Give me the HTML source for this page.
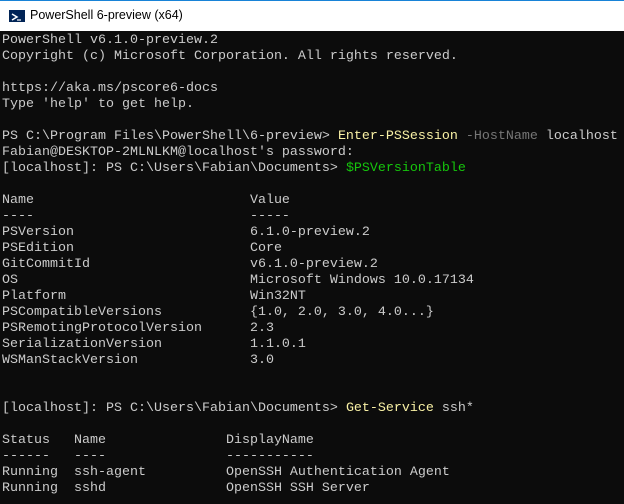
<!DOCTYPE html>
<html><head><style>
html,body{margin:0;padding:0;width:624px;height:504px;overflow:hidden;background:#0c0c0c}
.title{position:absolute;left:0;top:0;width:624px;height:31px;background:#fff;border-top:1px solid #1883d7;box-sizing:border-box}
.title span{position:absolute;left:30px;top:7px;font:12.5px "Liberation Sans",sans-serif;color:#000}
.icon{position:absolute;left:9px;top:9px;width:16px;height:12px;background:#012456;}
pre{position:absolute;left:2px;top:33px;margin:0;font-family:"Liberation Mono",monospace;font-size:13.33px;line-height:16px;color:#cccccc;white-space:pre}
.y{color:#f9f1a5}.g{color:#16c60c}.d{color:#767676}
</style></head><body>
<div class="title"><div class="icon"><svg width="16" height="12"><path d="M3 3 L8 6 L3 9" stroke="#fff" stroke-width="1.5" fill="none"/><path d="M8 9 H12" stroke="#fff" stroke-width="1.2"/></svg></div><span>PowerShell 6-preview (x64)</span></div>
<pre>PowerShell v6.1.0-preview.2
Copyright (c) Microsoft Corporation. All rights reserved.

https://aka.ms/pscore6-docs
Type 'help' to get help.

PS C:\Program Files\PowerShell\6-preview> <span class="y">Enter-PSSession</span> <span class="d">-HostName</span> localhost
Fabian@DESKTOP-2MLNLKM@localhost's password:
[localhost]: PS C:\Users\Fabian\Documents> <span class="g">$PSVersionTable</span>

Name                           Value
----                           -----
PSVersion                      6.1.0-preview.2
PSEdition                      Core
GitCommitId                    v6.1.0-preview.2
OS                             Microsoft Windows 10.0.17134
Platform                       Win32NT
PSCompatibleVersions           {1.0, 2.0, 3.0, 4.0...}
PSRemotingProtocolVersion      2.3
SerializationVersion           1.1.0.1
WSManStackVersion              3.0


[localhost]: PS C:\Users\Fabian\Documents> <span class="y">Get-Service</span> ssh*

Status   Name               DisplayName
------   ----               -----------
Running  ssh-agent          OpenSSH Authentication Agent
Running  sshd               OpenSSH SSH Server</pre>
</body></html>
